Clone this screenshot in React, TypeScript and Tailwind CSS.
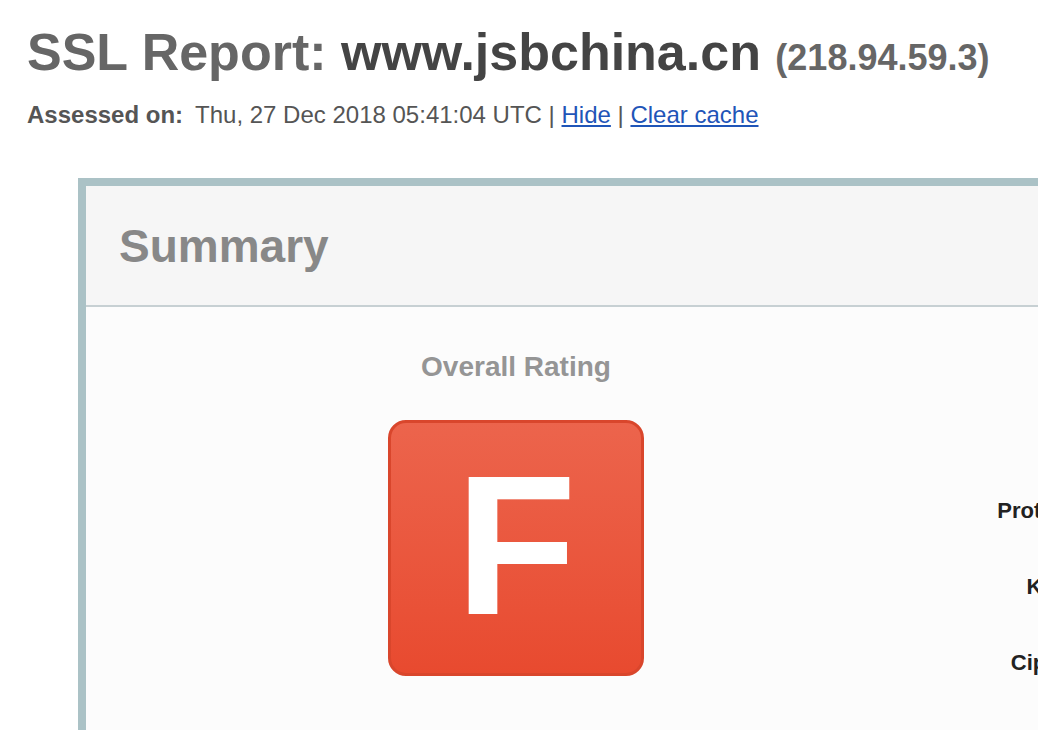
import React from "react";

const labels = ["Certificate", "Protocol Support", "Key Exchange", "Cipher Strength"];

export default function App() {
  return (
    <div className="h-[730px] w-full overflow-hidden bg-white font-['Liberation_Sans',Arial,sans-serif]">
      <div className="pl-[27px] pt-[26px]">
        <h1 className="whitespace-nowrap text-[52px] font-bold leading-none text-[#666]">
          SSL Report: <span className="text-[#444]">www.jsbchina.cn</span>{" "}
          <span className="text-[36px] text-[#666]">(218.94.59.3)</span>
        </h1>
        <div className="mt-[25px] whitespace-nowrap text-[24px] leading-none text-[#555]">
          <span className="font-bold">Assessed on:</span>
          <span className="ml-[12px]">Thu, 27 Dec 2018 05:41:04 UTC | </span>
          <a href="#" className="text-[#1f55b8] underline">Hide</a>
          <span> | </span>
          <a href="#" className="text-[#1f55b8] underline">Clear cache</a>
        </div>
      </div>

      <section className="ml-[78px] mt-[51px] w-[1200px] border-l-8 border-t-8 border-[#abc2c6]">
        <div className="h-[121px] border-b-2 border-[#c7d0d3] bg-[#f6f6f6] pl-[33px] pt-[37px]">
          <h2 className="text-[46px] font-bold leading-none text-[#888]">Summary</h2>
        </div>

        <div className="flex h-[500px] bg-[#fcfcfc]">
          <div className="flex w-[860px] flex-col items-center pt-[46px]">
            <div className="text-[28px] font-bold leading-none text-[#959595]">Overall Rating</div>
            <div className="mt-[39px] flex h-[256px] w-[256px] items-center justify-center rounded-[18px] border-[3px] border-[#d9462c] bg-gradient-to-b from-[#ec644c] to-[#e84a2f]">
              <span className="-mt-[4px] text-[198px] font-bold leading-none text-white">F</span>
            </div>
          </div>
          <div className="w-[231px] pt-[90px] text-right">
            {labels.map((l) => (
              <div key={l} className="whitespace-nowrap text-[22px] font-bold leading-[76px] text-[#222]">
                {l}
              </div>
            ))}
          </div>
        </div>
      </section>
    </div>
  );
}
